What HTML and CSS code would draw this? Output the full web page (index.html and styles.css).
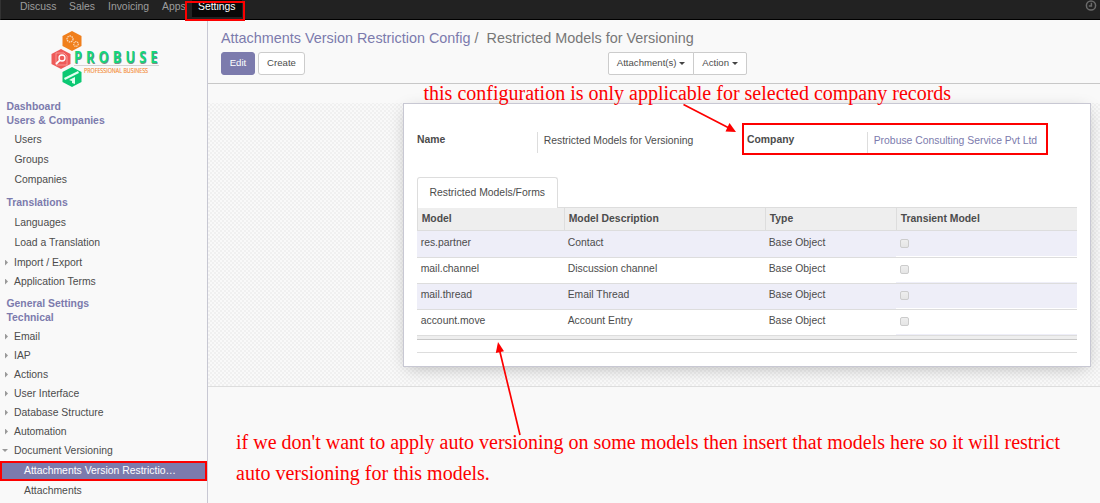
FILE: index.html
```html
<!DOCTYPE html>
<html lang="en">
<head>
<meta charset="utf-8">
<title>Restricted Models for Versioning</title>
<link rel="stylesheet" href="styles.css">
</head>
<body>
<div class="page">
  <nav class="navbar">
    <a class="nav-discuss">Discuss</a><a class="nav-sales">Sales</a><a class="nav-invoicing">Invoicing</a><a class="nav-apps">Apps</a><a class="nav-settings">Settings</a>
    <svg class="clock" width="12" height="12" viewBox="0 0 12 12"><circle cx="6" cy="5.500" r="4.600"/><path d="M6.400 2.700V6H3.800"/></svg>
  </nav>
  <div class="body">
    <aside class="sidebar">
      <svg class="logo" width="112" height="60" viewBox="0 0 112 60">
        <path fill="#f07f1c" d="M22 1l9.500 5v10l-9.500 5-9.500-5V6z"/>
        <path fill="#ee5a58" d="M11 19l9.500 5v10l-9.500 5-9.500-5V24z"/>
        <path fill="#0cc873" d="M22 37l9.500 5v10l-9.500 5-9.500-5V42z"/>
        <g fill="none" stroke="#fbd9b8"><circle cx="20" cy="9" r="3" stroke-width="1.300" stroke-dasharray="1.500 .7"/><circle cx="26" cy="14" r="2.300" stroke-width="1.200" stroke-dasharray="1.200 .6"/></g>
        <g fill="none" stroke="#fff"><path d="M6 23h8l3 3v9H6z" stroke="#f7a5a3" stroke-width=".8"/><circle cx="12" cy="28" r="3" stroke-width="1.300"/><path d="M9.700 30.300L6 34" stroke-width="1.800"/></g>
        <g fill="#e2fff0"><path d="M14 48l14-7 1 2-14 7zM19 50l6-3v7l-3-1v-2z"/></g>
        <path d="M24 35.500h85" stroke="#d4d4d4"/>
        <g transform="translate(24 33) scale(.78 1)">
          <text x=".8" y=".5" textLength="107" class="logo-shade">PROBUSE</text>
          <text x="0" y="-.2" textLength="107" class="logo-name">PROBUSE</text>
        </g>
        <text x="34" y="43.300" textLength="64" lengthAdjust="spacingAndGlyphs" class="logo-tag">PROFESSIONAL BUSINESS</text>
      </svg>
      <h4>Dashboard</h4>
      <h4>Users &amp; Companies</h4>
      <ul class="links">
        <li>Users</li><li>Groups</li><li>Companies</li>
      </ul>
      <h4>Translations</h4>
      <ul class="links mixed">
        <li>Languages</li><li>Load a Translation</li>
        <li class="fold">Import / Export</li><li class="fold">Application Terms</li>
      </ul>
      <h4>General Settings</h4>
      <h4>Technical</h4>
      <ul class="links">
        <li class="fold">Email</li><li class="fold">IAP</li><li class="fold">Actions</li><li class="fold">User Interface</li><li class="fold">Database Structure</li><li class="fold">Automation</li><li class="fold open">Document Versioning</li>
        <li class="sub active">Attachments Version Restrictio…</li>
        <li class="sub">Attachments</li>
      </ul>
    </aside>
    <main class="main">
      <header class="control">
        <div class="crumbs"><a>Attachments Version Restriction Config</a><span class="slash">/</span><span>Restricted Models for Versioning</span></div>
        <div class="buttons">
          <button class="btn primary">Edit</button><button class="btn create">Create</button>
          <div class="group"><button class="btn attach">Attachment(s) <i class="caret"></i></button><button class="btn action">Action <i class="caret"></i></button></div>
        </div>
      </header>
      <section class="form-view">
        <div class="sheet">
          <div class="fields">
            <b>Name</b><span class="value">Restricted Models for Versioning</span>
            <b>Company</b><span class="value link">Probuse Consulting Service Pvt Ltd</span>
          </div>
          <div class="tabs"><span class="tab">Restricted Models/Forms</span></div>
          <div class="table">
            <div class="row head"><span>Model</span><span>Model Description</span><span>Type</span><span>Transient Model</span></div>
            <div class="row odd"><span>res.partner</span><span>Contact</span><span>Base Object</span><span class="check"><i></i></span></div>
            <div class="row"><span>mail.channel</span><span>Discussion channel</span><span>Base Object</span><span class="check"><i></i></span></div>
            <div class="row odd"><span>mail.thread</span><span>Email Thread</span><span>Base Object</span><span class="check"><i></i></span></div>
            <div class="row"><span>account.move</span><span>Account Entry</span><span>Base Object</span><span class="check"><i></i></span></div>
            <div class="foot"></div>
          </div>
          <div class="rule"></div>
        </div>
      </section>
    </main>
  </div>
  <div class="mark mark-settings"></div>
  <div class="mark mark-company"></div>
  <div class="mark mark-menu"></div>
  <p class="note note-top">this configuration is only applicable for selected company records</p>
  <p class="note note-bottom">if we don't want to apply auto versioning on some models then insert that models here so it will restrict<br>auto versioning for this models.</p>
  <svg class="arrows" width="1100" height="503" viewBox="0 0 1100 503">
    <path d="M683.500 104.500L729 128M520 435L499.500 350"/>
    <polygon points="736,132 725.500,131.500 729.500,123"/>
    <polygon points="498,342 504,351.200 495.800,353"/>
  </svg>
</div>
</body>
</html>
```
FILE: styles.css
```css
* { box-sizing: border-box; }
body { margin: 0; background: #f9f9f9; font: 10.4px/14px "Liberation Sans", Arial, sans-serif; color: #4c4c4c; }
.page { position: relative; width: 1100px; height: 503px; overflow: hidden; display: flex; flex-direction: column; }

.navbar { height: 20px; flex: none; display: flex; background: #222; border-bottom: 1px solid #000; border-left: 1px solid #333; color: #9d9d9d; padding-left: 19px; line-height: 13px; }
.nav-discuss { width: 49px; }
.nav-sales { width: 39px; }
.nav-invoicing { width: 54px; }
.nav-apps { width: 30px; }
.nav-settings { width: 50px; height: 17px; padding-left: 6px; background: #080808; color: #fff; }
.clock { margin-left: auto; margin-right: 3px; fill: none; stroke: #6a6a6a; stroke-width: 1.5; }

.body { flex: 1; display: flex; min-height: 0; }
.sidebar { width: 208px; flex: none; border-right: 1px solid #c8c8d3; padding-top: 10px; }
.logo { display: block; margin: 0 0 10px 50px; }
.logo text { font-family: "Open Sans", sans-serif; }
.logo-name, .logo-shade { font-size: 16.5px; font-weight: 700; fill: #14d67c; }
.logo text.logo-shade { fill: #808a85; }
.logo-tag { font-size: 6.5px; fill: #f58a32; stroke: #f58a32; stroke-width: .15px; }
.sidebar h4 { margin: 0; padding-left: 6.5px; font-size: 10.4px; line-height: 14px; height: 14px; color: #7c7bad; }
.links { list-style: none; margin: 2px 0 6px; padding: 0; }
.links li { height: 20px; line-height: 20px; padding-left: 14.5px; }
.links.mixed { margin: 3px 0 6px; }
.links .fold { height: 19px; line-height: 20px; padding-left: 5px; display: flex; align-items: center; }
.fold::before { content: ""; width: 9px; height: 6px; flex: none; background: #999; clip-path: polygon(0 0, 3px 3px, 0 6px); }
.links .fold.open { padding-left: 2px; }
.fold.open::before { width: 12px; clip-path: polygon(0 1.5px, 6px 1.5px, 3px 4.5px); }
.links .sub { padding-left: 24px; }
.links .active { background: #7c7bad; color: #fff; margin-top: 1px; }

.main { flex: 1; min-width: 0; }
.control { height: 64px; border-bottom: 1px solid #c8c8c8; padding: 9px 13px 0; }
.crumbs { font-size: 14.4px; line-height: 18px; color: #777; white-space: pre; }
.crumbs a { color: #7c7bad; }
.slash { margin: 0 8px 0 4px; }
.buttons { display: flex; margin-top: 5px; }
.btn { height: 23px; padding: 0 0 2px; border: 1px solid #ccc; border-radius: 3px; background: #fff; color: #4c4c4c; font: 9.6px/19px "Liberation Sans", Arial, sans-serif; }
.primary { width: 34px; background: #7c7bad; border-color: #7c7bad; color: #fff; margin-right: 3px; }
.create { width: 47px; }
.group { display: flex; margin-left: 303px; }
.attach { width: 86px; border-radius: 2px 0 0 2px; }
.action { width: 54px; margin-left: -1px; border-radius: 0 2px 2px 0; }
.caret { display: inline-block; border: solid transparent; border-width: 3px 3px 0; border-top-color: #444; vertical-align: 1px; }

.form-view { height: 303px; padding: 19px 9px 0 195px; border-bottom: 1px solid #ddd; background: linear-gradient(#f9f9f9, #f9f9f9) 0 0 / 100% 19px no-repeat, repeating-conic-gradient(#f0f0f0 0 25%, #f9f9f9 0 50%) 0 0 / 4px 4px; }
.sheet { height: 264px; padding: 28px 13px 0; background: #fff; border: 1px solid #c8c8d3; box-shadow: 0 4px 16px -4px rgba(0,0,0,.28); }
.fields { display: grid; grid-template-columns: 120px 210px 120px 210px; height: 21px; line-height: 15px; }
.value { border-left: 1px solid #ddd; padding: 1px 0 0 5.7px; }
.link { color: #7c7bad; }
.tabs { display: flex; height: 30px; margin-top: 24px; }
.tab { width: 141px; height: 31px; padding: 7px 0 7px 11.5px; line-height: 16px; white-space: nowrap; background: #fff; border: 1px solid #ddd; border-bottom: 0; border-radius: 3px 3px 0 0; position: relative; }
.row { display: grid; grid-template-columns: 147px 201px 131px 181px; height: 26px; line-height: 23px; }
.row > span { border-bottom: 1px solid #ddd; padding-left: 3.7px; }
.head { height: 24px; line-height: 22px; font-weight: 700; background: #eee; border-top: 1px solid #ddd; }
.head > span { border-left: 1px solid #ddd; }
.odd { background: #eeeef8; }
.row .check { height: 27px; z-index: 1; padding: 8px 0 0 4px; box-shadow: inset 0 -1px #eeeef8; }
.odd .check { box-shadow: inset 0 -1px #fff; }
.check i { display: block; width: 9px; height: 9px; border: 1px solid #ccc; border-radius: 2px; background: linear-gradient(#eee, #e5e5e5); }
.foot { height: 5px; background: #eee; border-bottom: 1px solid #c8c8c8; }
.rule { height: 13px; border-bottom: 1px solid #ddd; }

/* Annotations lying over the interface */
.mark { position: absolute; border: 2px solid #fd0000; }
.mark-settings { left: 185px; top: 1px; width: 60px; height: 20px; }
.mark-company { left: 742px; top: 123px; width: 306px; height: 32px; }
.mark-menu { left: 0; top: 461px; width: 207px; height: 20px; }
.note { position: absolute; margin: 0; color: #fd0000; font: 20px/31px "Liberation Serif", "Times New Roman", serif; white-space: nowrap; }
.note-top { left: 423.5px; top: 78px; }
.note-bottom { left: 236px; top: 427px; }
.arrows { position: absolute; left: 0; top: 0; fill: #fd0000; stroke: none; }
.arrows path { stroke: #fd0000; stroke-width: 1.7; }
```
